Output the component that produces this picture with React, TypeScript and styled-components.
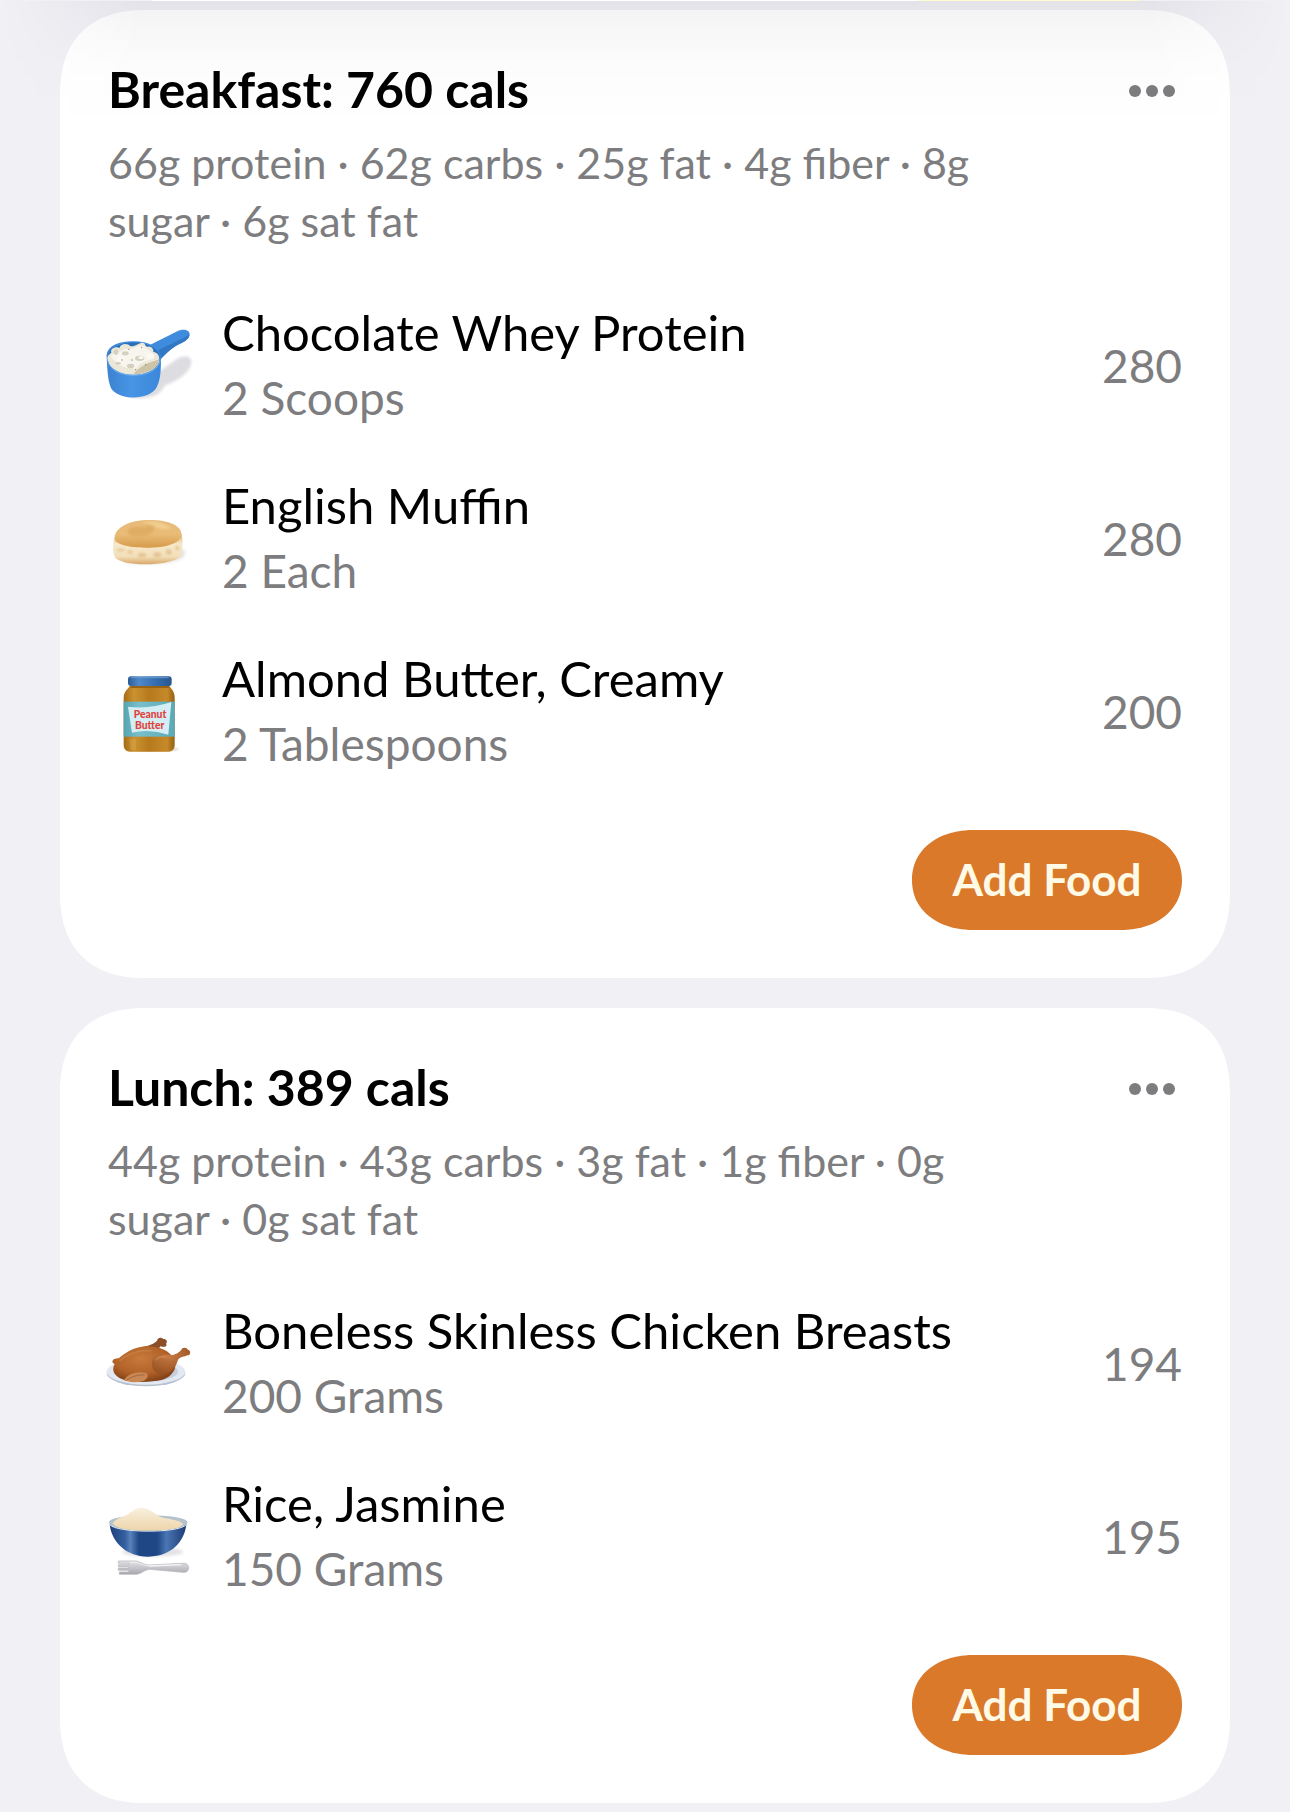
import React from "react";
import styled, { createGlobalStyle } from "styled-components";

const GlobalStyle = createGlobalStyle`
  *, *::before, *::after { box-sizing: border-box; }
  html { background: #f0f0f5; }
  body {
    margin: 0;
    background: #f0f0f5;
    color: #000;
    font-family: Lato, "Open Sans", sans-serif;
  }
  h2, p, ul { margin: 0; padding: 0; }
`;

const Page = styled.main`
  position: relative;
  padding: 0 60px 9px;
  overflow: hidden;
`;

const TopShade = styled.div`
  position: absolute;
  inset: 1px 0 auto;
  height: 124px;
  pointer-events: none;
  background: linear-gradient(to bottom, rgba(0, 0, 12, 0.052), rgba(0, 0, 12, 0.032) 28px, rgba(0, 0, 12, 0.01) 64px, transparent);
  mask-image: linear-gradient(to right, transparent, #000 140px, #000 calc(100% - 140px), transparent);
`;

const PreviousCardEdge = styled.div`
  display: flex;
  justify-content: flex-end;
  height: 1px;
  margin: 0 92px 9px;
  background: #fff;
`;

const PreviousHighlight = styled.div`
  width: 220px;
  background: #fdfdcf;
`;

const Meals = styled.div`
  display: grid;
  gap: 30px;
`;

const Card = styled.section`
  padding: 47px 48px 48px;
  background: #fff;
  border-radius: 74px;
  @supports (corner-shape: squircle) {
    border-radius: 86px;
    corner-shape: superellipse(1.24);
  }
`;

const CardHeader = styled.header`
  display: grid;
  grid-template-columns: 1fr auto;
  align-items: start;
  column-gap: 110px;
`;

const Title = styled.h2`
  font-size: 50px;
  line-height: 64px;
  font-weight: 700;
`;

const Nutrition = styled.p`
  margin-top: 13px;
  font-size: 43px;
  line-height: 58px;
  color: #7d7d7f;
`;

const MenuButton = styled.button`
  display: flex;
  align-items: center;
  height: 68px;
  padding: 0 6px;
  border: 0;
  background: none;
  color: #7d7d7f;
  cursor: pointer;
`;

const FoodList = styled.ul`
  display: grid;
  gap: 45px;
  margin-top: 52px;
  list-style: none;
`;

const FoodRow = styled.li`
  display: grid;
  grid-template-columns: 84px 1fr auto;
  align-items: center;
  column-gap: 30px;
`;

const FoodIcon = styled.svg`
  display: block;
  width: 84px;
  height: 84px;
  overflow: visible;
`;

const FoodName = styled.p`
  margin-bottom: 4px;
  font-size: 49px;
  line-height: 60px;
  font-weight: 400;
`;

const Portion = styled.p`
  font-size: 46px;
  line-height: 64px;
  color: #7d7d7f;
`;

const Calories = styled.span`
  font-size: 46px;
  line-height: 64px;
  color: #7d7d7f;
`;

const CardFooter = styled.footer`
  display: flex;
  justify-content: flex-end;
  margin-top: 54px;
`;

const AddButton = styled.button`
  min-width: 270px;
  height: 100px;
  padding: 0 30px 2px;
  border: 0;
  border-radius: 56px / 50px;
  @supports (corner-shape: squircle) {
    border-radius: 62px / 50px;
    corner-shape: superellipse(1.1);
  }
  background: #db792b;
  color: #fffae6;
  font: 700 44px/58px Lato, "Open Sans", sans-serif;
  cursor: pointer;
`;

const ScoopIcon = () => (
  <FoodIcon viewBox="54 42 252 252" aria-hidden="true">
    <defs>
      <linearGradient id="scoopBody" x1="0" x2="1">
        <stop offset="0" stopColor="#3c82cf" />
        <stop offset=".45" stopColor="#4795e6" />
        <stop offset="1" stopColor="#3b86d8" />
      </linearGradient>
      <filter id="scoopBlur"><feGaussianBlur stdDeviation="4" /></filter>
    </defs>
    <path d="M120 262 C190 272 214 250 224 226 C262 214 304 186 304 154 C300 134 276 138 262 146 L206 186Z" fill="#dcdce1" filter="url(#scoopBlur)" />
    <path d="M181 104 L262 64 C276 56 300 58 299 74 C298 84 288 92 276 98 C250 110 236 122 213 146Z" fill="#3f8bdd" />
    <path d="M204 122 C232 104 268 92 298 74 C298 84 288 92 276 98 C250 110 236 122 213 146Z" fill="#3278c5" />
    <path d="M50 142 C48 110 82 94 130 94 C178 94 212 112 213 146 C213 190 210 212 200 232 C178 272 88 272 64 236 C54 216 52 184 50 142Z" fill="url(#scoopBody)" />
    <ellipse cx="131" cy="144" rx="78" ry="47" fill="#2c6fb6" />
    <path d="M53 150 C50 138 56 134 64 128 C60 116 78 108 88 114 C92 98 116 100 120 108 C134 112 146 98 158 98 C166 98 164 108 172 110 C184 108 192 118 190 126 C204 126 212 142 206 158 C196 182 162 194 130 194 C94 194 58 178 53 150Z" fill="#ece8d9" />
    <path d="M130 192 C170 194 208 174 207 148 C188 158 160 158 130 192Z" fill="#cdc4a8" />
    <path d="M62 138 C76 122 92 130 104 116 C124 124 136 108 158 106 C170 118 190 124 192 142 C170 160 148 154 140 176 C112 176 80 170 62 138Z" fill="#f7f5ed" />
    <g fill="#d3d0c0">
      <ellipse cx="149" cy="145" rx="14" ry="8" />
      <ellipse cx="106" cy="130" rx="10" ry="6" />
      <ellipse cx="122" cy="168" rx="11" ry="7" />
      <ellipse cx="78" cy="126" rx="7" ry="8" />
      <ellipse cx="84" cy="160" rx="9" ry="4" />
    </g>
    <g fill="#faf9f4">
      <ellipse cx="153" cy="143" rx="8" ry="4" />
      <ellipse cx="182" cy="139" rx="11" ry="9" />
      <ellipse cx="92" cy="148" rx="12" ry="9" />
    </g>
    <g fill="#8b806a">
      <circle cx="96" cy="150" r="2" /><circle cx="126" cy="150" r="2" /><circle cx="137" cy="179" r="2" />
      <circle cx="155" cy="112" r="2" /><circle cx="167" cy="164" r="2" /><circle cx="116" cy="118" r="2" />
    </g>
    <path d="M52 150 C60 184 94 196 132 196 C172 196 206 180 211 150" fill="none" stroke="#6baef0" strokeWidth="3" />
  </FoodIcon>
);

const MuffinIcon = () => (
  <FoodIcon viewBox="54 -9 252 252" aria-hidden="true">
    <defs>
      <linearGradient id="muffinTop" x1="0" y1="0" x2="0" y2="1">
        <stop offset="0" stopColor="#e6b978" />
        <stop offset=".5" stopColor="#e9bd77" />
        <stop offset="1" stopColor="#d79a4b" />
      </linearGradient>
      <linearGradient id="muffinSide" x1="0" y1="0" x2="0" y2="1">
        <stop offset="0" stopColor="#dcae6c" />
        <stop offset=".35" stopColor="#f7e9cb" />
        <stop offset=".75" stopColor="#f3dfba" />
        <stop offset="1" stopColor="#d9a968" />
      </linearGradient>
      <filter id="muffinBlur"><feGaussianBlur stdDeviation="5" /></filter>
      <filter id="muffinSoft"><feGaussianBlur stdDeviation="3" /></filter>
    </defs>
    <path d="M96 186 C170 200 280 190 284 164 C288 150 278 144 262 146Z" fill="#e6e3e0" filter="url(#muffinBlur)" />
    <path d="M74 112 C68 134 68 156 74 170 C88 200 238 200 270 170 C278 156 280 122 274 100Z" fill="url(#muffinSide)" />
    <path d="M74 112 C76 82 118 60 178 60 C238 60 276 78 274 104 C276 120 252 134 216 140 C158 148 70 142 74 112Z" fill="url(#muffinTop)" />
    <path d="M112 92 C130 68 160 92 178 74 C206 82 188 106 160 108 C134 110 112 106 112 92Z" fill="#d99f53" opacity=".5" filter="url(#muffinSoft)" />
    <path d="M152 66 C188 60 226 68 244 84 C222 92 202 88 190 76Z" fill="#f1cd8f" filter="url(#muffinSoft)" />
    <g fill="#d9b47e" opacity=".6" filter="url(#muffinSoft)">
      <ellipse cx="92" cy="150" rx="12" ry="4" /><ellipse cx="120" cy="156" rx="8" ry="5" />
      <ellipse cx="156" cy="165" rx="13" ry="7" /><ellipse cx="202" cy="164" rx="12" ry="8" />
      <ellipse cx="236" cy="156" rx="9" ry="8" /><ellipse cx="262" cy="144" rx="6" ry="7" />
    </g>
  </FoodIcon>
);

const JarIcon = () => (
  <FoodIcon viewBox="24 30 252 252" aria-hidden="true">
    <defs>
      <linearGradient id="jarBody" x1="0" x2="1">
        <stop offset="0" stopColor="#a56a16" />
        <stop offset=".2" stopColor="#cb9230" />
        <stop offset=".5" stopColor="#b67a1e" />
        <stop offset=".85" stopColor="#c78929" />
        <stop offset="1" stopColor="#96600f" />
      </linearGradient>
      <linearGradient id="jarLid" x1="0" x2="1">
        <stop offset="0" stopColor="#2c5c97" />
        <stop offset=".25" stopColor="#5089c9" />
        <stop offset=".6" stopColor="#3670b0" />
        <stop offset="1" stopColor="#28568e" />
      </linearGradient>
      <linearGradient id="jarBand" x1="0" x2="1">
        <stop offset="0" stopColor="#56a3b3" />
        <stop offset=".3" stopColor="#78bfca" />
        <stop offset="1" stopColor="#5aa9b7" />
      </linearGradient>
      <filter id="jarBlur"><feGaussianBlur stdDeviation="3" /></filter>
    </defs>
    <ellipse cx="158" cy="268" rx="78" ry="6" fill="#d4c6ab" filter="url(#jarBlur)" />
    <path d="M90 74 H208 C210 86 224 90 224 112 V254 C224 270 214 275 200 275 H96 C80 275 71 270 71 254 V112 C71 92 88 86 90 74Z" fill="url(#jarBody)" />
    <path d="M94 78 H206 L208 84 H90Z" fill="#986314" />
    <rect x="71" y="125" width="153" height="105" fill="url(#jarBand)" />
    <path d="M84 140 Q148 148 214 126 L205 224 Q150 206 96 218Z" fill="#d5eef3" />
    <rect x="84" y="49" width="131" height="29" rx="9" fill="url(#jarLid)" />
    <path d="M94 53 H205" stroke="#6799d0" strokeWidth="3" strokeLinecap="round" />
    <g fill="#e0413c" fontFamily="Lato, sans-serif" fontWeight="900" fontSize="31" textAnchor="middle">
      <text x="150" y="175">Peanut</text>
      <text x="149" y="207">Butter</text>
    </g>
    <path d="M88 238 H108 V270 H92Z" fill="#dda84e" opacity=".4" />
  </FoodIcon>
);

const ChickenIcon = () => (
  <FoodIcon viewBox="54 9 252 252" aria-hidden="true">
    <defs>
      <radialGradient id="birdBody" cx=".45" cy=".35" r=".7">
        <stop offset="0" stopColor="#c77a3c" />
        <stop offset=".6" stopColor="#b16228" />
        <stop offset="1" stopColor="#7b3c12" />
      </radialGradient>
      <radialGradient id="birdThigh" cx=".45" cy=".3" r=".75">
        <stop offset="0" stopColor="#c87a44" />
        <stop offset="1" stopColor="#94501f" />
      </radialGradient>
    </defs>
    <ellipse cx="168" cy="162" rx="118" ry="40" fill="#b7c0ce" />
    <ellipse cx="168" cy="158" rx="118" ry="39" fill="#e3e9f2" />
    <ellipse cx="170" cy="158" rx="94" ry="30" fill="#c7cfdd" />
    <path d="M158 84 C178 80 192 76 202 64 C202 56 214 54 220 60 C230 60 234 68 228 74 C234 82 222 86 212 82 C204 88 208 92 214 98Z" fill="#8b4e26" />
    <path d="M67 130 C68 120 76 118 86 118 C112 96 136 84 166 82 C204 80 242 94 254 124 C264 156 238 184 194 186 C154 192 106 190 84 174 C66 162 68 146 74 136Z" fill="url(#birdBody)" />
    <path d="M186 130 C190 108 216 104 240 108 C256 108 268 100 274 92 C276 84 290 84 294 92 C304 94 302 110 292 109 C284 114 272 112 264 122 C256 150 238 166 212 164 C192 162 184 148 186 130Z" fill="url(#birdThigh)" />
    <path d="M102 184 C112 164 144 156 168 162 C178 168 172 180 160 186 C138 192 116 190 102 184Z" fill="#c98756" />
    <path d="M110 184 C122 174 144 166 164 168" fill="none" stroke="#a8673a" strokeWidth="3" />
    <path d="M88 126 C116 102 150 92 184 96" fill="none" stroke="#d1894b" strokeWidth="5" opacity=".5" />
    <path d="M196 124 C204 114 218 112 230 114" fill="none" stroke="#dc9a67" strokeWidth="6" opacity=".4" />
  </FoodIcon>
);

const RiceIcon = () => (
  <FoodIcon viewBox="54 16 252 252" aria-hidden="true">
    <defs>
      <linearGradient id="bowlBody" x1="0" x2="1">
        <stop offset="0" stopColor="#1d3f7c" />
        <stop offset=".2" stopColor="#34609f" />
        <stop offset=".27" stopColor="#5983bd" />
        <stop offset=".38" stopColor="#204785" />
        <stop offset=".62" stopColor="#1f4685" />
        <stop offset=".74" stopColor="#4a76b4" />
        <stop offset="1" stopColor="#1c3b74" />
      </linearGradient>
      <linearGradient id="ricePile" x1="0" y1="0" x2="0" y2="1">
        <stop offset="0" stopColor="#faf0df" />
        <stop offset="1" stopColor="#ecd4a8" />
      </linearGradient>
      <linearGradient id="forkMetal" x1="0" y1="0" x2="0" y2="1">
        <stop offset="0" stopColor="#e3e3e8" />
        <stop offset="1" stopColor="#a7a7ae" />
      </linearGradient>
      <filter id="bowlBlur"><feGaussianBlur stdDeviation="4" /></filter>
    </defs>
    <ellipse cx="188" cy="187" rx="92" ry="14" fill="#e2e2e6" filter="url(#bowlBlur)" />
    <path d="M57 98 C58 70 290 70 292 98 C290 118 274 124 174 128 C76 124 60 118 57 98Z" fill="#b4c2cc" />
    <path d="M68 102 C74 86 98 84 116 72 C132 60 140 54 156 54 C176 54 190 70 212 82 C240 90 270 90 280 104 C264 122 214 126 174 126 C128 126 84 120 68 102Z" fill="url(#ricePile)" />
    <path d="M59 104 C76 128 260 132 289 104 C284 154 246 200 176 201 C108 202 64 156 59 104Z" fill="url(#bowlBody)" />
    <path d="M59 105 C80 130 264 132 289 105" fill="none" stroke="#e8edf0" strokeWidth="3" />
    <path d="M85 214 H140 C154 218 162 226 178 226 L276 221 C290 219 296 226 296 234 C296 244 290 249 278 248 L178 239 C162 242 154 252 140 254 H88 V247 H116 V242 H85 V235 H116 V231 H85 V225 H116 V221 H85Z" fill="url(#forkMetal)" stroke="#b4b4ba" strokeWidth="2" />
    <path d="M178 229 L274 225" stroke="#f6f6f8" strokeWidth="4" />
    <path d="M120 218 H140 C154 222 162 228 178 229" fill="none" stroke="#f1f1f4" strokeWidth="3" />
  </FoodIcon>
);

type Food = { name: string; portion: string; calories: number; Icon: React.FC };
type Meal = { id: string; title: string; nutrition: string; foods: Food[] };

const meals: Meal[] = [
  {
    id: "breakfast",
    title: "Breakfast: 760 cals",
    nutrition: "66g protein · 62g carbs · 25g fat · 4g fiber · 8g sugar · 6g sat fat",
    foods: [
      { name: "Chocolate Whey Protein", portion: "2 Scoops", calories: 280, Icon: ScoopIcon },
      { name: "English Muffin", portion: "2 Each", calories: 280, Icon: MuffinIcon },
      { name: "Almond Butter, Creamy", portion: "2 Tablespoons", calories: 200, Icon: JarIcon },
    ],
  },
  {
    id: "lunch",
    title: "Lunch: 389 cals",
    nutrition: "44g protein · 43g carbs · 3g fat · 1g fiber · 0g sugar · 0g sat fat",
    foods: [
      { name: "Boneless Skinless Chicken Breasts", portion: "200 Grams", calories: 194, Icon: ChickenIcon },
      { name: "Rice, Jasmine", portion: "150 Grams", calories: 195, Icon: RiceIcon },
    ],
  },
];

const MealCard = ({ meal }: { meal: Meal }) => (
  <Card aria-labelledby={meal.id}>
    <CardHeader>
      <div>
        <Title id={meal.id}>{meal.title}</Title>
        <Nutrition>{meal.nutrition}</Nutrition>
      </div>
      <MenuButton type="button" aria-label="More options">
        <svg width="48" height="14" viewBox="0 0 48 14" fill="currentColor" aria-hidden="true">
          <circle cx="7" cy="7" r="6" />
          <circle cx="24" cy="7" r="6" />
          <circle cx="41" cy="7" r="6" />
        </svg>
      </MenuButton>
    </CardHeader>
    <FoodList>
      {meal.foods.map(({ name, portion, calories, Icon }) => (
        <FoodRow key={name}>
          <Icon />
          <div>
            <FoodName>{name}</FoodName>
            <Portion>{portion}</Portion>
          </div>
          <Calories>{calories}</Calories>
        </FoodRow>
      ))}
    </FoodList>
    <CardFooter>
      <AddButton type="button">Add Food</AddButton>
    </CardFooter>
  </Card>
);

export default function App() {
  return (
    <>
      <GlobalStyle />
      <Page>
        <PreviousCardEdge>
          <PreviousHighlight />
        </PreviousCardEdge>
        <Meals>
          {meals.map((meal) => (
            <MealCard key={meal.id} meal={meal} />
          ))}
        </Meals>
        <TopShade />
      </Page>
    </>
  );
}
